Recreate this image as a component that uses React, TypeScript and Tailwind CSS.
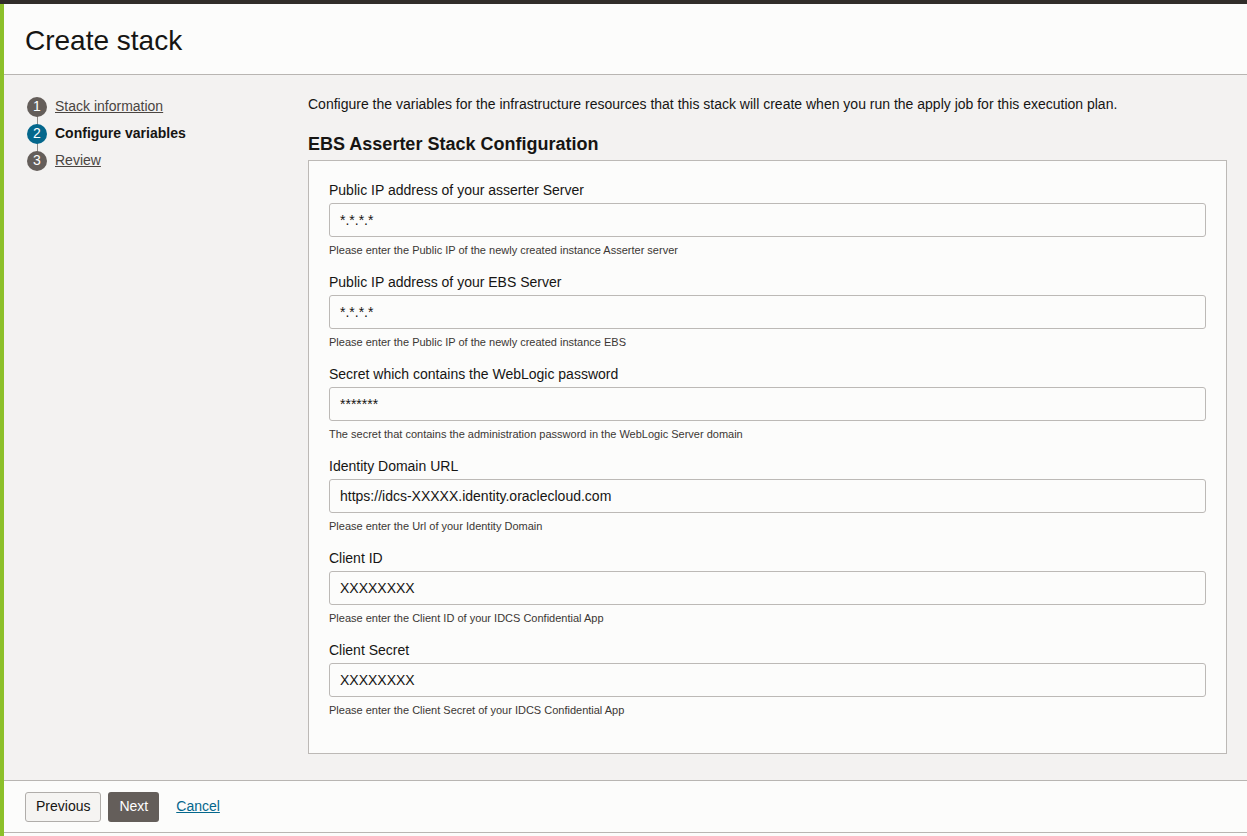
import React from 'react';

const fields = [
  {
    label: 'Public IP address of your asserter Server',
    value: '*.*.*.*',
    help: 'Please enter the Public IP of the newly created instance Asserter server',
  },
  {
    label: 'Public IP address of your EBS Server',
    value: '*.*.*.*',
    help: 'Please enter the Public IP of the newly created instance EBS',
  },
  {
    label: 'Secret which contains the WebLogic password',
    value: '*******',
    help: 'The secret that contains the administration password in the WebLogic Server domain',
  },
  {
    label: 'Identity Domain URL',
    value: 'https://idcs-XXXXX.identity.oraclecloud.com',
    help: 'Please enter the Url of your Identity Domain',
  },
  {
    label: 'Client ID',
    value: 'XXXXXXXX',
    help: 'Please enter the Client ID of your IDCS Confidential App',
  },
  {
    label: 'Client Secret',
    value: 'XXXXXXXX',
    help: 'Please enter the Client Secret of your IDCS Confidential App',
  },
];

const steps = [
  { n: 1, label: 'Stack information', active: false },
  { n: 2, label: 'Configure variables', active: true },
  { n: 3, label: 'Review', active: false },
];

function Field({ label, value, help }: { label: string; value: string; help: string }) {
  return (
    <div className="flex flex-col">
      <label className="text-[14px] leading-[20px] text-[#161513]">{label}</label>
      <div className="mt-[3px] h-[34px] border border-[#bcb9b6] rounded-[3px] bg-[#fcfcfb] flex items-center px-[10px] text-[14px] text-[#161513]">
        {value}
      </div>
      <p className="mt-[6px] text-[11px] leading-[14px] text-[#3b3734]">{help}</p>
    </div>
  );
}

export default function App() {
  return (
    <div
      className="h-[836px] w-full flex flex-col bg-[#fcfcfb] overflow-hidden"
      style={{ fontFamily: '"Liberation Sans", Arial, sans-serif' }}
    >
      {/* Top bar */}
      <div className="h-[4px] bg-[#312d2a] shrink-0" />

      <div className="flex flex-1 min-h-0">
        {/* Green accent */}
        <div className="w-[4px] bg-[#8cc02a] shrink-0" />

        <div className="flex-1 flex flex-col min-w-0">
          {/* Header */}
          <header className="h-[71px] shrink-0 border-b border-[#b8b5b2] bg-[#fcfcfb] flex items-center pl-[21px] pt-[4px]">
            <h1 className="text-[28px] text-[#161513]">Create stack</h1>
          </header>

          {/* Body */}
          <div className="h-[705px] shrink-0 bg-[#f3f2f1] flex pl-[21px] pr-[20px] pt-[18px]">
            {/* Steps */}
            <nav className="w-[283px] shrink-0 flex flex-col">
              {steps.map((s, i) => (
                <div key={s.n} className="relative flex items-center h-[27px]">
                  {i < steps.length - 1 && (
                    <div className="absolute left-[12px] top-[18px] h-[18px] w-px bg-[#8d8985]" />
                  )}
                  <div
                    className={`relative z-10 ml-[2px] w-[20px] h-[20px] rounded-full flex items-center justify-center text-white text-[14px] ${
                      s.active ? 'bg-[#04678c]' : 'bg-[#645e5a]'
                    }`}
                  >
                    {s.n}
                  </div>
                  <span
                    className={`ml-[8px] text-[14px] ${
                      s.active ? 'font-bold text-[#161513]' : 'underline text-[#4a4541]'
                    }`}
                  >
                    {s.label}
                  </span>
                </div>
              ))}
            </nav>

            {/* Main */}
            <main className="flex-1 min-w-0 flex flex-col pt-[2px]">
              <p className="text-[14px] leading-[18px] text-[#161513]">
                Configure the variables for the infrastructure resources that this stack will create when you run the apply job for this execution plan.
              </p>
              <h2 className="mt-[20px] text-[18px] leading-[22px] font-bold text-[#161513]">
                EBS Asserter Stack Configuration
              </h2>
              <div className="mt-[5px] border border-[#bcb9b6] bg-[#fcfcfb] px-[20px] pt-[19px] pb-[36px] flex flex-col gap-[15px]">
                {fields.map((f) => (
                  <Field key={f.label} {...f} />
                ))}
              </div>
            </main>
          </div>

          {/* Footer */}
          <footer className="h-[53px] shrink-0 border-t border-b border-[#b8b5b2] bg-[#fcfcfb] flex items-center pl-[21px] gap-[7px]">
            <button className="h-[30px] px-[10px] border border-[#b0adaa] rounded-[3px] bg-[#f5f4f2] text-[14px] text-[#161513]">
              Previous
            </button>
            <button className="h-[30px] px-[11px] rounded-[3px] bg-[#645e5a] text-[14px] text-white">
              Next
            </button>
            <a className="ml-[10px] text-[14px] underline text-[#04678c] cursor-pointer">Cancel</a>
          </footer>
        </div>
      </div>
    </div>
  );
}
